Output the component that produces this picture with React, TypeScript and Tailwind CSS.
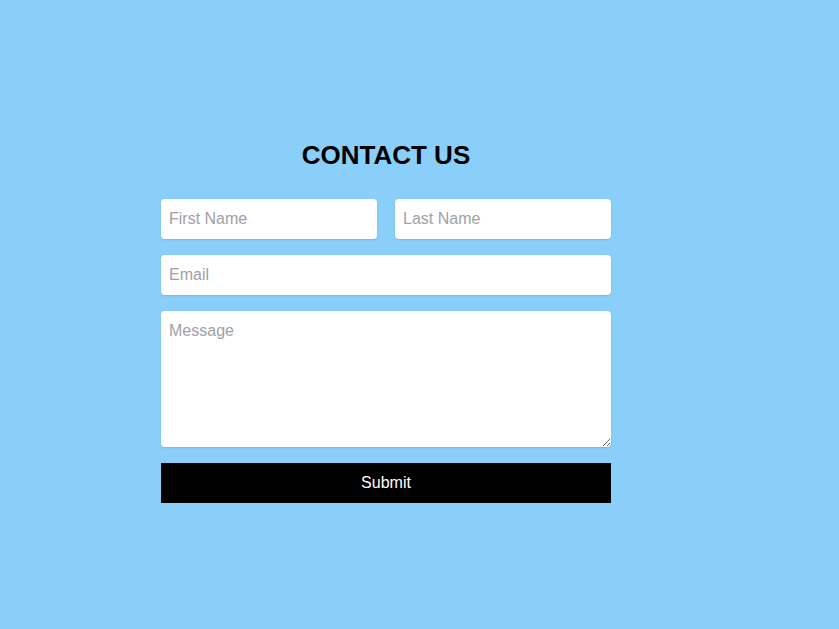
export default function App() {
  const field =
    "h-10 w-full rounded bg-white px-2 text-base text-black outline-none shadow-[0_1px_2px_rgba(0,0,0,0.12)] placeholder:text-[#a0a0a8]";

  return (
    <div className="min-h-[629px] w-full bg-[#8acff9] font-['Liberation_Sans',Arial,sans-serif]">
      <div className="ml-[161px] w-[450px] pt-[140px]">
        <h1 className="mb-[29px] text-center text-[26px] font-bold leading-[30px] text-black">
          CONTACT US
        </h1>
        <form className="flex flex-col gap-4" onSubmit={(e) => e.preventDefault()}>
          <div className="flex gap-[18px]">
            <input className={field} placeholder="First Name" />
            <input className={field} placeholder="Last Name" />
          </div>
          <input className={field} placeholder="Email" />
          <textarea
            className="h-[136px] w-full rounded bg-white px-2 py-[11px] text-base leading-[18px] text-black outline-none shadow-[0_1px_2px_rgba(0,0,0,0.12)] placeholder:text-[#a0a0a8]"
            placeholder="Message"
          />
          <button
            type="submit"
            className="h-10 w-full bg-black text-base text-white"
          >
            Submit
          </button>
        </form>
      </div>
    </div>
  );
}
